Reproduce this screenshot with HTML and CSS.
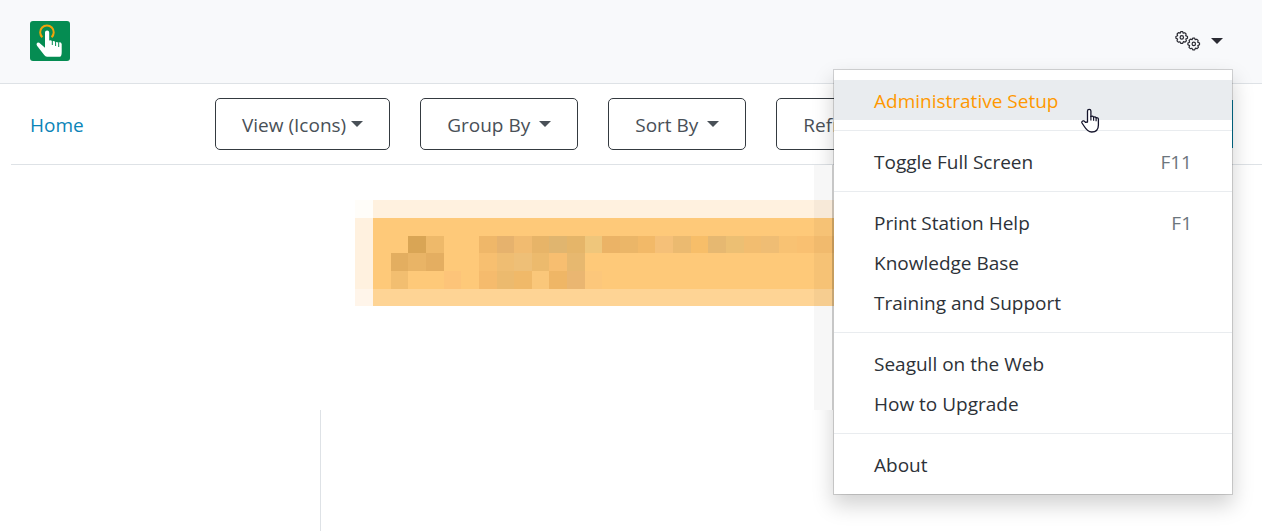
FILE: index.html
```html
<!DOCTYPE html>
<html lang="en">
<head>
    <meta charset="UTF-8">
    <meta name="viewport" content="width=device-width, initial-scale=1.0">
    <title>Print Station</title>
    <link rel="stylesheet" href="styles.css">
</head>
<body>
    <header class="header">
        <a href="#" class="logo" aria-label="Print Station">
            <svg width="40" height="40" viewBox="0 0 40 40">
                <rect width="40" height="40" rx="3" fill="#058c52"/>
                <path d="M12.3 16.2A6.8 6.8 0 1 1 21.6 16.2" fill="none" stroke="#f0a30a" stroke-width="2"/>
                <path d="M15 11.5a2.1 2.1 0 0 1 4.2 0v8q1.7-.7 3 .8 1.800-.8 3.200.8 1.700-.5 3 .7 2.600-1.400 3.300 1.200V31q0 4.800-2 4.800H17q-1.700 0-2.800-1.700L7 24.800q-1.200-2.200.3-3.100 1.500-.7 3.100 1l4.600 4z" fill="#fff"/>
                <path d="M22.300 20v4M25.600 20.500v4.500M28.700 21.500V26" stroke="#058c52" stroke-width="1" fill="none"/>
            </svg>
        </a>

        <div class="dropdown">
            <button class="settings" aria-label="Settings">
                <svg class="gears" width="26" height="22" viewBox="0 0 26 22" fill="none" stroke="#2b2b33" stroke-width="1.200" stroke-linejoin="round">
                    <path id="gear" d="M5.700 1.600h2l.5 1.600 1.500-.5 1.400 1.200-.4 1.700 1.800.9v1.800l-1.700.8.6 1.700-1.300 1.400-1.700-.5-.7 1.600h-2l-.8-1.600-1.600.5-1.300-1.300.6-1.800-1.700-.8V6.500l1.700-.8-.5-1.700L3.400 2.700l1.700.5z"/>
                    <circle cx="6.800" cy="7.400" r="1.700"/>
                    <use href="#gear" x="12" y="6.500"/>
                    <circle cx="18.800" cy="13.900" r="1.700"/>
                </svg>
                <span class="caret"></span>
            </button>

            <nav class="menu">
                <a href="#" class="menu-item active">Administrative Setup</a>
                <hr>
                <a href="#" class="menu-item">Toggle Full Screen <span class="shortcut">F11</span></a>
                <hr>
                <a href="#" class="menu-item">Print Station Help <span class="shortcut">F1</span></a>
                <a href="#" class="menu-item">Knowledge Base</a>
                <a href="#" class="menu-item">Training and Support</a>
                <hr>
                <a href="#" class="menu-item">Seagull on the Web</a>
                <a href="#" class="menu-item">How to Upgrade</a>
                <hr>
                <a href="#" class="menu-item">About</a>
                <svg class="pointer" width="20" height="26" viewBox="0 0 20 26">
                    <path d="M6.500 14V3a1.700 1.700 0 0 1 3.400 0v5.500q1.700-1 2.700.6 1.700-.7 2.500.7 2.300-.4 2.300 1.700V17c0 4.500-2.600 7-6.700 7-4 0-5.700-2.700-7.700-6l-2-3c-.6-1.300.4-2.500 1.800-2.100q1 .3 1.700 1.500z" fill="#fff" stroke="#14142b" stroke-width="1.300" stroke-linejoin="round"/>
                    <path d="M9.900 8v4.500M12.600 9v3.800M15.100 9.800v3.400" stroke="#14142b" stroke-width="1.200" fill="none"/>
                </svg>
            </nav>
        </div>
    </header>

    <div class="toolbar">
        <div class="breadcrumb"><a href="#">Home</a></div>
        <button class="btn">View (Icons)<span class="caret tight"></span></button>
        <button class="btn">Group By<span class="caret"></span></button>
        <button class="btn">Sort By<span class="caret"></span></button>
        <button class="btn">Refresh</button>
        <button class="btn-search" aria-label="Search"></button>
    </div>

    <main class="main">
        <aside class="sidebar"></aside>
        <section class="content">
            <svg class="preview" width="479" height="245" viewBox="0 0 479 245" shape-rendering="crispEdges">
                <path fill="#fff" d="M0 0h479v245H0z"/>
                <path fill="#fffdf9" d="M0 35h18v18H0z"/>
                <path fill="#fff1df" d="M18 35h461v18H18zM0 53h18v71H0z"/>
                <path fill="#fff5ea" d="M0 124h18v17H0z"/>
                <path fill="#fec979" d="M18 53h461v71H18z"/>
                <path fill="#fed495" d="M18 124h461v17H18z"/>
                <!-- row 1 -->
                <path fill="#d9a555" d="M53 71h18v17H53z"/>
                <path fill="#eeb96a" d="M71 71h18v17H71z"/>
                <path fill="#efb769" d="M124 71h18v17H124z"/>
                <path fill="#e6b26d" d="M142 71h17v17H142z"/>
                <path fill="#f1bb70" d="M159 71h18v17H159z"/>
                <path fill="#e7b468" d="M177 71h17v17H177z"/>
                <path fill="#e0b56f" d="M194 71h18v17H194z"/>
                <path fill="#e5b569" d="M212 71h18v17H212z"/>
                <path fill="#efc67b" d="M230 71h17v17H230z"/>
                <path fill="#ebb366" d="M247 71h18v17H247z"/>
                <path fill="#ebb668" d="M265 71h18v17H265z"/>
                <path fill="#f2b968" d="M283 71h17v17H283z"/>
                <path fill="#f5c078" d="M300 71h18v17H300z"/>
                <path fill="#ebba70" d="M318 71h18v17H318z"/>
                <path fill="#f7be69" d="M336 71h17v17H336z"/>
                <path fill="#e6b871" d="M353 71h18v17H353z"/>
                <path fill="#ecbf73" d="M371 71h18v17H371z"/>
                <path fill="#f2bd70" d="M389 71h17v17H389z"/>
                <path fill="#efbd74" d="M406 71h18v17H406z"/>
                <path fill="#f8c273" d="M424 71h18v17H424z"/>
                <path fill="#f9c071" d="M442 71h37v17H442z"/>
                <!-- row 2 -->
                <path fill="#e3ae60" d="M36 88h17v18H36z"/>
                <path fill="#e9b466" d="M53 88h18v18H53z"/>
                <path fill="#e4ae61" d="M71 88h18v18H71z"/>
                <path fill="#f7bf70" d="M124 88h18v18H124z"/>
                <path fill="#efbd72" d="M142 88h17v18H142z"/>
                <path fill="#eebf77" d="M159 88h18v18H159z"/>
                <path fill="#ecba6d" d="M177 88h17v18H177z"/>
                <path fill="#f7be70" d="M194 88h18v18H194z"/>
                <path fill="#e7b86f" d="M212 88h18v18H212z"/>
                <!-- row 3 -->
                <path fill="#f2be70" d="M36 106h17v18H36z"/>
                <path fill="#fdc479" d="M89 106h17v18H89z"/>
                <path fill="#f5bb6d" d="M124 106h18v18H124z"/>
                <path fill="#ecba6e" d="M142 106h17v18H142z"/>
                <path fill="#f0b969" d="M159 106h18v18H159z"/>
                <path fill="#fac77a" d="M177 106h17v18H177z"/>
                <path fill="#efb666" d="M194 106h18v18H194z"/>
                <path fill="#eab671" d="M212 106h18v18H212z"/>
                <path fill="#fcc77b" d="M230 106h17v18H230z"/>
                <!-- shaded right edge -->
                <path fill="#000" fill-opacity=".03" d="M459 0h18v245h-18z"/>
                <path fill="#000" fill-opacity=".22" d="M477 0h2v245h-2z"/>
            </svg>
        </section>
    </main>
</body>
</html>
```
FILE: styles.css
```css
* {
    box-sizing: border-box;
    margin: 0;
    padding: 0;
}

html, body {
    height: 100%;
}

body {
    display: flex;
    flex-direction: column;
    font-family: "Segoe UI", "Open Sans", sans-serif;
    font-size: 19px;
    line-height: 28px;
    color: #2d3238;
    background: #fff;
    overflow: hidden;
}

a {
    text-decoration: none;
}

button {
    font: inherit;
    cursor: pointer;
}

.header {
    display: flex;
    align-items: center;
    justify-content: space-between;
    height: 84px;
    padding: 0 29px 2px 30px;
    background: #f8f9fb;
    border-bottom: 1px solid #dee2e6;
}

.logo svg {
    display: block;
}

.dropdown {
    position: relative;
}

.settings {
    display: flex;
    align-items: center;
    gap: 10px;
    padding: 10px;
    color: #2b2b33;
    background: none;
    border: 0;
}

.caret {
    border-top: 6px solid;
    border-left: 6px solid transparent;
    border-right: 6px solid transparent;
}

.menu {
    position: absolute;
    top: 100%;
    right: 0;
    z-index: 1;
    width: 400px;
    margin-top: 7px;
    padding: 10px 0;
    background: #fff;
    background-clip: padding-box;
    border: 1px solid rgba(0, 0, 0, 0.15);
    box-shadow: 0 10px 20px rgba(0, 0, 0, 0.18);
}

.menu hr {
    margin: 10px 0;
    border: 0;
    border-top: 1px solid #e9ecef;
}

.menu-item {
    display: flex;
    justify-content: space-between;
    padding: 7px 40px 5px;
    color: #2d3238;
}

.menu-item.active {
    color: #ff9800;
    background: #e9ecef;
}

.shortcut {
    color: #6c757d;
}

.pointer {
    position: absolute;
    top: 38px;
    left: 247px;
}

.toolbar {
    display: flex;
    align-items: center;
    gap: 30px;
    height: 81px;
    margin-left: 11px;
    padding: 0 29px 0 19px;
    border-bottom: 1px solid #dee2e6;
}

.breadcrumb {
    width: 155px;
    padding-top: 2px;
}

.breadcrumb a {
    color: #0a84b8;
}

.btn {
    display: flex;
    align-items: center;
    gap: 9px;
    height: 52px;
    padding: 2px 26px 0;
    color: #495057;
    background: #fff;
    border: 1px solid #343a40;
    border-radius: 5px;
}

.btn .caret {
    margin-bottom: 2px;
}

.btn .tight {
    margin-left: -4px;
}

.btn-search {
    width: 54px;
    height: 48px;
    margin-left: auto;
    background: #007b9e;
    border: 0;
}

.main {
    display: flex;
    flex: 1;
}

.sidebar {
    width: 321px;
    margin-top: 245px;
    border-right: 1px solid #dee2e6;
}

.content {
    flex: 1;
    padding-left: 34px;
}

.preview {
    display: block;
    position: relative;
    z-index: 2;
}
```
